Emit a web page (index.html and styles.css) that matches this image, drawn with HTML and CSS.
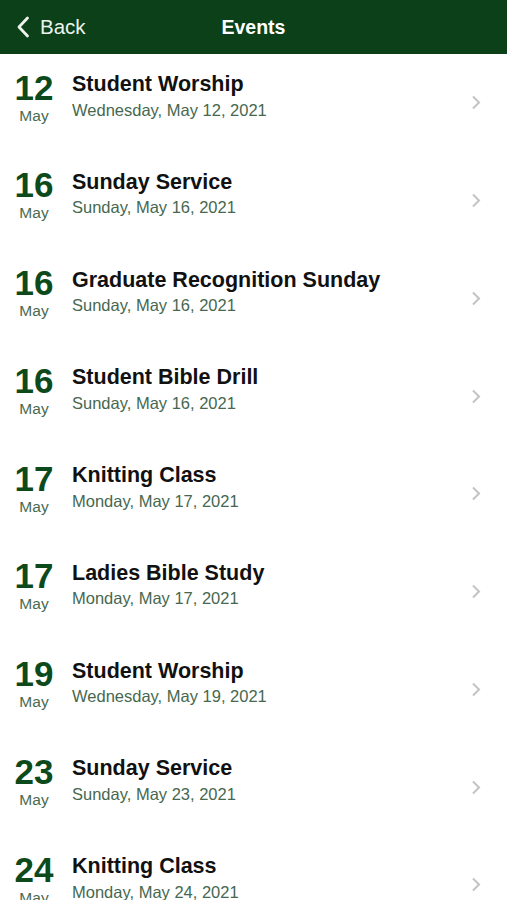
FILE: index.html
```html
<!DOCTYPE html>
<html lang="en">
<head>
    <meta charset="UTF-8">
    <meta name="viewport" content="width=device-width, initial-scale=1.0">
    <title>Events</title>
    <link rel="stylesheet" href="styles.css">
</head>
<body>

    <div class="nav-bar">
        <a class="back-btn" href="#">
            <svg class="back-icon" width="14" height="22" viewBox="0 0 14 22">
                <path d="M11.5 2 L3 11 L11.5 20" fill="none" stroke="currentColor" stroke-width="2.8" stroke-linecap="round" stroke-linejoin="round"/>
            </svg>
            <span>Back</span>
        </a>
        <h1 class="nav-title">Events</h1>
    </div>

    <!-- Event list -->
    <ul class="event-list">
        <li class="event-row">
            <div class="event-date"><span class="day">12</span><span class="month">May</span></div>
            <div class="event-info"><p class="event-title">Student Worship</p><p class="event-sub">Wednesday, May 12, 2021</p></div>
            <svg class="chevron" width="10" height="15" viewBox="0 0 10 15"><path d="M2 1.5 L8 7.5 L2 13.5" fill="none" stroke="#c3c3c6" stroke-width="2"/></svg>
        </li>
        <li class="event-row">
            <div class="event-date"><span class="day">16</span><span class="month">May</span></div>
            <div class="event-info"><p class="event-title">Sunday Service</p><p class="event-sub">Sunday, May 16, 2021</p></div>
            <svg class="chevron" width="10" height="15" viewBox="0 0 10 15"><path d="M2 1.5 L8 7.5 L2 13.5" fill="none" stroke="#c3c3c6" stroke-width="2"/></svg>
        </li>
        <li class="event-row">
            <div class="event-date"><span class="day">16</span><span class="month">May</span></div>
            <div class="event-info"><p class="event-title">Graduate Recognition Sunday</p><p class="event-sub">Sunday, May 16, 2021</p></div>
            <svg class="chevron" width="10" height="15" viewBox="0 0 10 15"><path d="M2 1.5 L8 7.5 L2 13.5" fill="none" stroke="#c3c3c6" stroke-width="2"/></svg>
        </li>
        <li class="event-row">
            <div class="event-date"><span class="day">16</span><span class="month">May</span></div>
            <div class="event-info"><p class="event-title">Student Bible Drill</p><p class="event-sub">Sunday, May 16, 2021</p></div>
            <svg class="chevron" width="10" height="15" viewBox="0 0 10 15"><path d="M2 1.5 L8 7.5 L2 13.5" fill="none" stroke="#c3c3c6" stroke-width="2"/></svg>
        </li>
        <li class="event-row">
            <div class="event-date"><span class="day">17</span><span class="month">May</span></div>
            <div class="event-info"><p class="event-title">Knitting Class</p><p class="event-sub">Monday, May 17, 2021</p></div>
            <svg class="chevron" width="10" height="15" viewBox="0 0 10 15"><path d="M2 1.5 L8 7.5 L2 13.5" fill="none" stroke="#c3c3c6" stroke-width="2"/></svg>
        </li>
        <li class="event-row">
            <div class="event-date"><span class="day">17</span><span class="month">May</span></div>
            <div class="event-info"><p class="event-title">Ladies Bible Study</p><p class="event-sub">Monday, May 17, 2021</p></div>
            <svg class="chevron" width="10" height="15" viewBox="0 0 10 15"><path d="M2 1.5 L8 7.5 L2 13.5" fill="none" stroke="#c3c3c6" stroke-width="2"/></svg>
        </li>
        <li class="event-row">
            <div class="event-date"><span class="day">19</span><span class="month">May</span></div>
            <div class="event-info"><p class="event-title">Student Worship</p><p class="event-sub">Wednesday, May 19, 2021</p></div>
            <svg class="chevron" width="10" height="15" viewBox="0 0 10 15"><path d="M2 1.5 L8 7.5 L2 13.5" fill="none" stroke="#c3c3c6" stroke-width="2"/></svg>
        </li>
        <li class="event-row">
            <div class="event-date"><span class="day">23</span><span class="month">May</span></div>
            <div class="event-info"><p class="event-title">Sunday Service</p><p class="event-sub">Sunday, May 23, 2021</p></div>
            <svg class="chevron" width="10" height="15" viewBox="0 0 10 15"><path d="M2 1.5 L8 7.5 L2 13.5" fill="none" stroke="#c3c3c6" stroke-width="2"/></svg>
        </li>
        <li class="event-row">
            <div class="event-date"><span class="day">24</span><span class="month">May</span></div>
            <div class="event-info"><p class="event-title">Knitting Class</p><p class="event-sub">Monday, May 24, 2021</p></div>
            <svg class="chevron" width="10" height="15" viewBox="0 0 10 15"><path d="M2 1.5 L8 7.5 L2 13.5" fill="none" stroke="#c3c3c6" stroke-width="2"/></svg>
        </li>
    </ul>

</body>
</html>
```

FILE: styles.css
```css
body {
    font-family: "Liberation Sans", Arial, sans-serif;
    margin: 0;
    background-color: white;
    height: 900px;
    overflow: hidden;
}

/* Top navigation bar */
.nav-bar {
    height: 54px;
    background-color: #0b4018;
    display: flex;
    align-items: center;
    justify-content: center;
    position: relative;
    color: #f2f6f2;
}

.back-btn {
    position: absolute;
    left: 16px;
    top: 0;
    height: 54px;
    display: flex;
    align-items: center;
    gap: 10px;
    color: #eef3ee;
    text-decoration: none;
    font-size: 20.5px;
}

.back-icon {
    display: block;
}

.nav-title {
    margin: 0;
    font-size: 19.5px;
    font-weight: bold;
    color: white;
}

/* Events */
.event-list {
    list-style: none;
    margin: 0;
    padding: 0;
}

.event-row {
    height: 97.75px;
    box-sizing: border-box;
    display: flex;
    align-items: flex-start;
    padding: 15.5px 26px 0 6px;
}

.event-date {
    width: 56px;
    display: flex;
    flex-direction: column;
    align-items: center;
}

.day {
    font-size: 35px;
    line-height: 35px;
    font-weight: bold;
    color: #0c4a1c;
}

.month {
    margin-top: 3px;
    font-size: 15.5px;
    line-height: 16px;
    color: #4a6a52;
}

.event-info {
    flex: 1;
    margin-left: 10px;
    margin-top: 1.5px;
}

.event-info p {
    margin: 0;
}

.event-title {
    font-size: 21.5px;
    line-height: 26px;
    font-weight: bold;
    color: #111;
}

.event-sub {
    margin-top: 2.5px !important;
    font-size: 16.5px;
    line-height: 20px;
    color: #46684f;
}

/* pulled up by the row's top padding so it sits in the middle of the row */
.chevron {
    align-self: center;
    display: block;
    margin-top: -15.5px;
}
```
